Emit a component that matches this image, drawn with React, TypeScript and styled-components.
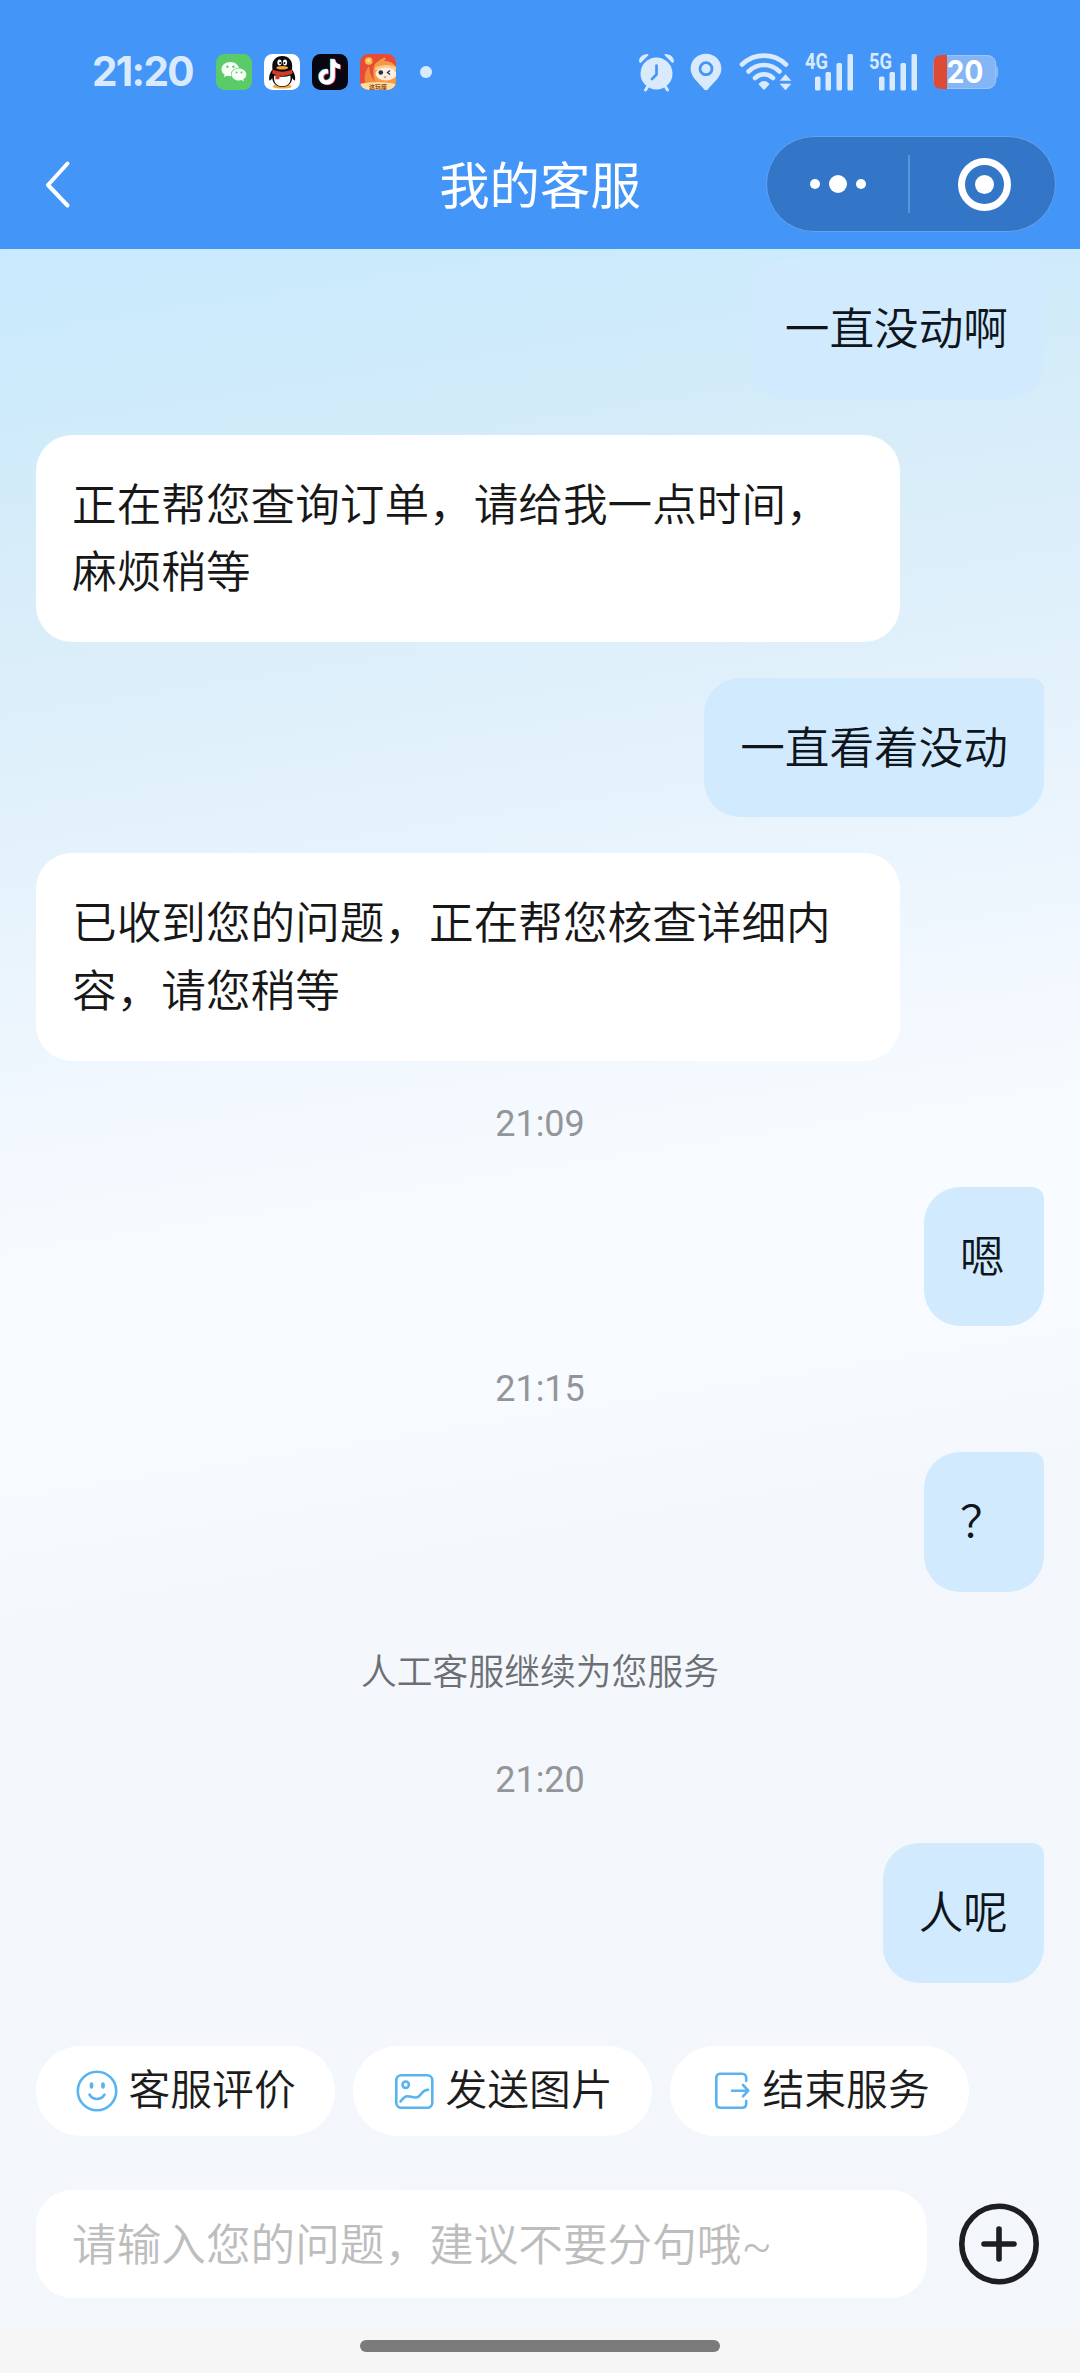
import React from "react";
import styled, { createGlobalStyle } from "styled-components";

const cjk = `Roboto, "Noto Sans CJK SC", sans-serif`;

const GlobalStyle = createGlobalStyle`
  * { box-sizing: border-box; }
  body { margin: 0; background: #f3f7fc; }
`;

const Screen = styled.main`
  width: 1080px;
  height: 2373px;
  display: flex;
  flex-direction: column;
  overflow: hidden;
  font-family: ${cjk};
  font-weight: 350;
  color: #171717;
  background: #f3f7fc;
`;

const Header = styled.header`
  flex: none;
  height: 249px;
  background: #4395f8;
`;

const StatusBar = styled.div`
  height: 120px;
  padding: 24px 81px 0 92px;
  display: flex;
  align-items: center;
  justify-content: space-between;
`;

const StatusGroup = styled.div<{ $gap: number }>`
  display: flex;
  align-items: center;
  gap: ${(p) => p.$gap}px;
`;

const Clock = styled.span`
  width: 112px;
  font: 650 40.5px/48px Inter, sans-serif;
  letter-spacing: -1.7px;
  color: #d9eafd;
  white-space: nowrap;
`;

const MoreDot = styled.span`
  width: 12px;
  height: 12px;
  margin-left: 12px;
  border-radius: 50%;
  background: #d9eafd;
`;

const NavBar = styled.div`
  height: 129px;
  padding: 16px 24px 0 39px;
  display: grid;
  grid-template-columns: 356px 1fr 356px;
  align-items: start;
`;

const BackButton = styled.button`
  width: 40px;
  height: 96px;
  padding: 0;
  border: 0;
  background: none;
  display: flex;
  align-items: center;
`;

const Title = styled.h1`
  margin: 0;
  padding-right: 15px;
  text-align: center;
  font-size: 50.4px;
  line-height: 102px;
  font-weight: 400;
  color: #fff;
  white-space: nowrap;
`;

const Capsule = styled.div`
  justify-self: end;
  width: 290px;
  height: 96px;
  border: 1.5px solid #61a3ee;
  border-radius: 48px;
  background: #3375c7;
  display: flex;
  align-items: center;
`;

const CapsuleHalf = styled.div<{ $shift?: number }>`
  flex: 1;
  padding-left: ${(p) => p.$shift ?? 0}px;
  display: flex;
  align-items: center;
  justify-content: center;
  gap: 9px;
`;

const CapsuleDot = styled.span<{ $size: number }>`
  width: ${(p) => p.$size}px;
  height: ${(p) => p.$size}px;
  border-radius: 50%;
  background: #fff;
`;

const CapsuleDivider = styled.span`
  width: 2px;
  height: 58px;
  background: #5795dc;
`;

const CapsuleRing = styled.span`
  flex: none;
  width: 53px;
  height: 53px;
  border: 7px solid #fff;
  border-radius: 50%;
  display: flex;
  align-items: center;
  justify-content: center;
`;

const Body = styled.section`
  flex: 1;
  display: flex;
  flex-direction: column;
  background: linear-gradient(
    171deg,
    #c9e9fd 0%,
    #cdebfb 6%,
    #d6ecf9 13%,
    #ddeffa 21%,
    #e7f3fc 29%,
    #f0f7fe 37%,
    #f8fbff 45%,
    #f8fbff 52%,
    #f4f8fd 60%,
    #f3f7fc 100%
  );
`;

const Messages = styled.div`
  flex: none;
  height: 1797px;
  padding: 10px 36px 0;
  display: flex;
  flex-direction: column;
  gap: 36px;
`;

const Bubble = styled.div<{ $mine: boolean }>`
  align-self: ${(p) => (p.$mine ? "flex-end" : "flex-start")};
  width: ${(p) => (p.$mine ? "auto" : "864px")};
  min-width: 120px;
  padding: 38px 36px 34px;
  border-radius: ${(p) => (p.$mine ? "36px 12px 36px 36px" : "36px")};
  background: ${(p) => (p.$mine ? "#d2eafd" : "#fff")};
  color: ${(p) => (p.$mine ? "#0e161c" : "#171717")};
  font-size: 44.64px;
  line-height: 67.6px;
  word-break: break-all;
`;

const TimeRow = styled.time`
  height: 54px;
  text-align: center;
  font-size: 36px;
  font-weight: 400;
  line-height: 54px;
  color: #939599;
`;

const Notice = styled.p`
  margin: 0;
  height: 89.500px;
  text-align: center;
  font-size: 35.8px;
  line-height: 90px;
  color: #6c6f74;
`;

const Actions = styled.div`
  padding: 0 36px;
  display: flex;
  gap: 18px;
`;

const Chip = styled.button`
  width: 299px;
  height: 90px;
  padding: 0 0 0 40px;
  border: 0;
  border-radius: 45px;
  background: #fff;
  display: flex;
  align-items: center;
  gap: 10.5px;
  font-family: inherit;
  font-weight: inherit;
  font-size: 41.8px;
  line-height: 60px;
  color: #1c1c1c;
  white-space: nowrap;

  svg { flex: none; }
  span { margin-top: -1px; }
`;

const Composer = styled.div`
  margin-top: 54px;
  padding: 0 36px;
  height: 108px;
  display: flex;
  align-items: center;
  gap: 31px;
`;

const Field = styled.input`
  width: 891px;
  height: 108px;
  padding: 3px 36px 0;
  border: 0;
  border-radius: 36px;
  background: #fff;
  font-family: inherit;
  font-weight: inherit;
  font-size: 44.64px;

  &::placeholder { color: #bdbdbd; opacity: 1; }
`;

const PlusButton = styled.button`
  padding: 0;
  border: 0;
  background: none;
  display: flex;
`;

const HomeArea = styled.footer`
  margin-top: auto;
  height: 45px;
  padding-top: 12px;
  display: flex;
  justify-content: center;
  background: #f6f6f6;
`;

const HomeBar = styled.span`
  width: 360px;
  height: 12px;
  border-radius: 6px;
  background: #7b7b7b;
`;

const SignalSvg = styled.svg`
  overflow: visible;
`;

const WifiSlot = styled.span`
  display: flex;
  margin: 0 -2px 0 2px;
`;

const TINT = "#d9eafd";

const WeChatIcon = () => (
  <svg width="36" height="36" viewBox="0 0 36 36">
    <rect width="36" height="36" rx="8.5" fill="#5acb66" />
    <path d="M14.3 8C9.400 8 5.500 11.200 5.500 15.200c0 2.300 1.200 4.200 3.200 5.500l-.8 2.600 3-1.600c1 .3 2.100.5 3.400.5 4.900 0 8.800-3.100 8.800-7S19.200 8 14.300 8Z" fill="#f5fff5" />
    <ellipse cx="22.900" cy="20.200" rx="7.800" ry="6.500" fill="#5acb66" />
    <path d="M22.900 14.400c-4.100 0-7.300 2.600-7.300 6s3.200 6 7.300 6c.9 0 1.800-.1 2.600-.4l2.500 1.300-.6-2.200c1.800-1.100 2.900-2.700 2.900-4.700 0-3.300-3.300-6-7.400-6Z" fill="#f5fff5" />
    <g fill="#5acb66">
      <circle cx="11.400" cy="12.800" r="1.200" /><circle cx="17.400" cy="12.800" r="1.200" />
      <circle cx="20.500" cy="18.500" r="1" /><circle cx="25.500" cy="18.500" r="1" />
    </g>
  </svg>
);

const QQIcon = () => (
  <svg width="36" height="36" viewBox="0 0 36 36">
    <rect width="36" height="36" rx="8.500" fill="#fff" />
    <path d="M9 32.500c0-1.400 3-2.500 9-2.500s9.500 1.100 9.500 2.500c0 1.600-4 2-9.200 2S9 34 9 32.500Z" fill="#f2a83b" />
    <path d="M18.300 2C11.800 2 8.300 6.600 8.300 11.900l.1 3.700C6 18.900 4.700 22.300 5.200 26.300c.8.600 2.200-.7 3-2.300.6 5.300 4.400 9 10.100 9s9.400-3.700 10-9c.8 1.600 2.100 2.900 2.800 2.300.5-4-.8-7.400-3.100-10.700l.2-3.700C28.200 6.600 24.800 2 18.300 2Z" fill="#0b0b0d" />
    <path d="M10.300 21.500c4.800 1.800 11.500 1.800 16 0 1.300 6.200-1.800 10.800-8 10.800s-9.300-4.600-8-10.800Z" fill="#fff" />
    <path d="M8.700 15.600c5.900 2.700 13.500 2.700 19.200 0l.8 4c-3.800 1.900-8.400 2.600-13 2.200l-.4 3.400-4 .1.400-4.500-3.600-1.200Z" fill="#d43a2b" />
    <ellipse cx="15.500" cy="8.600" rx="2.100" ry="3" fill="#fff" />
    <ellipse cx="21" cy="8.600" rx="2.100" ry="3" fill="#fff" />
    <circle cx="16.100" cy="8.900" r="1" /><circle cx="20.500" cy="8.900" r="1" />
    <ellipse cx="18.200" cy="13.700" rx="5.900" ry="1.700" fill="#f2a83b" />
  </svg>
);

const notePath = "M18.700 5.200h4.200c.4 3.200 2.200 5 5.200 5.300v4.300c-2-.1-3.700-.7-5.200-1.700v9.100c0 5.200-3.600 8.400-8.200 8.400-4.300 0-7.700-3.300-7.700-7.700 0-4.800 4-8.100 9-7.600v4.400c-2.600-.6-4.700.9-4.700 3.200 0 2 1.500 3.400 3.400 3.400 2.400 0 4-1.500 4-4.200Z";

const TikTokIcon = () => (
  <svg width="36" height="36" viewBox="0 0 36 36">
    <rect width="36" height="36" rx="8.500" fill="#070611" />
    <path d={notePath} fill="#5fe3e4" transform="translate(-.8 -.5)" />
    <path d={notePath} fill="#ee3f64" transform="translate(.9 .6)" />
    <path d={notePath} fill="#fff" />
  </svg>
);

const GameIcon = () => (
  <svg width="36" height="36" viewBox="0 0 36 36">
    <defs><clipPath id="game-clip"><rect width="36" height="36" rx="8.500" /></clipPath></defs>
    <g clipPath="url(#game-clip)">
      <rect width="36" height="36" fill="#e94b37" />
      <circle cx="8.700" cy="7" r="3.800" fill="#f4bf4a" />
      <circle cx="8.700" cy="6.600" r="1.500" fill="#fbe6a0" />
      <path d="M5 29c-1-6 0-12 4-17 1 5 1 10 6 15v4Z" fill="#f08a3c" />
      <path d="M13.500 15c0-5 4-7.500 9-10.500 1.500-1 3-1 3.500 0l-2 2.500c6-.5 12 3 13 9v14H17c-4-4-4-10-3.500-15Z" fill="#f39a45" />
      <path d="M15 14c5-3.500 14-4 21-1v3H15Z" fill="#ffc987" />
      <ellipse cx="26" cy="20" rx="10.500" ry="6.500" fill="#fdf0e2" />
      <circle cx="20.800" cy="18.500" r="2.300" fill="#2e2c45" />
      <path d="m30 16.500-2.500 2 2.500 2" fill="none" stroke="#2e2c45" strokeWidth="1.300" />
      <path d="M23.500 22.500h3l-1.500 2Z" fill="#e86a4a" />
      <path d="M0 30c6-2.500 28-2.500 36 0v6H0Z" fill="#ffdf9f" />
      <text x="18" y="34.600" textAnchor="middle" fontSize="6" fontWeight="700" fill="#8c4a22">这玩座</text>
    </g>
  </svg>
);

const AlarmIcon = () => (
  <svg width="37" height="39" viewBox="0 0 37 39">
    <g stroke={TINT} strokeWidth="3" strokeLinecap="round"><path d="m10 33-2.500 4M27 33l2.500 4" /></g>
    <path d="M1.600 9.600C-.5 6.500 3.800.8 9.500 1c1 0 1.300 1 .6 1.600L3.200 9.500c-.5.600-1.200.6-1.600.1ZM35.400 9.600C37.500 6.500 33.200.8 27.500 1c-1 0-1.300 1-.6 1.600l6.900 6.900c.5.600 1.200.6 1.600.1Z" fill={TINT} />
    <circle cx="18.500" cy="20.500" r="16" fill={TINT} />
    <path d="M18.500 12.500v9l-4.500 4.500" fill="none" stroke="#4395f8" strokeWidth="2.700" strokeLinecap="round" strokeLinejoin="round" />
  </svg>
);

const PinIcon = () => (
  <svg width="32" height="38" viewBox="0 0 32 38">
    <path d="M16 .7C7.400.7.600 7.300.600 15.700c0 8.500 8.300 13.800 13.400 20.500 1.200 1.500 2.800 1.500 4 0 5.100-6.700 13.400-12 13.400-20.500C31.400 7.300 24.600.7 16 .7Z" fill={TINT} />
    <circle cx="16" cy="15.700" r="6" fill="none" stroke="#4395f8" strokeWidth="2.800" />
  </svg>
);

const WifiIcon = () => (
  <svg width="53" height="38" viewBox="0 0 53 38">
    <g fill="none" stroke={TINT} strokeWidth="4.600" strokeLinecap="round">
      <path d="M3 11.500c12.500-11.800 31.500-11.800 44 0M9.500 18.500c9-8.700 22-8.700 31 0M16 25c5.500-4.800 12.500-4.800 18 0" />
    </g>
    <path d="M20 30.500c3-3.300 7-3.300 10 0l.300 1-4.200 4.400c-.7.700-1.500.7-2.200 0l-4.200-4.400Z" fill={TINT} />
    <path d="m46.500 21.500 5.300 6H41.200ZM46.500 37l5.300-6H41.200Z" fill={TINT} stroke={TINT} strokeWidth=".6" strokeLinejoin="round" />
  </svg>
);

const SignalIcon = ({ label }: { label: string }) => (
  <SignalSvg width="49" height="46" viewBox="0 -3.500 49 46">
    <text x="0" y="16.500" fontFamily="Roboto, sans-serif" fontSize="21.500" fontWeight="700" textLength="23" lengthAdjust="spacingAndGlyphs" fill={TINT}>{label}</text>
    <g fill={TINT}>
      <rect x="10" y="24" width="5.500" height="14" rx="1.500" />
      <rect x="20.500" y="19.500" width="5.500" height="18.500" rx="1.500" />
      <rect x="31.500" y="10.500" width="5.500" height="27.500" rx="1.500" />
      <rect x="42.500" y="1.500" width="5.500" height="36.500" rx="1.500" />
    </g>
  </SignalSvg>
);

const BatteryIcon = () => (
  <svg width="66" height="36" viewBox="0 0 66 36">
    <path d="M62.500 11.500c2.200.6 2.700 2 2.700 6.500s-.5 5.900-2.700 6.500Z" fill="#84b9f8" />
    <rect x=".7" y="1.500" width="62" height="33" rx="8" fill="#84b6f6" stroke="#9cc6f9" strokeWidth="1" />
    <path d="M14 1v34H8.500c-5 0-8-3-8-8V9c0-5 3-8 8-8Z" fill="#dd4b37" />
    <text x="13.500" y="29.300" fontFamily="Inter, sans-serif" fontSize="31" fontWeight="700" textLength="37" lengthAdjust="spacingAndGlyphs" fill="#fff">20</text>
  </svg>
);

const SmileIcon = () => (
  <svg width="42" height="42" viewBox="0 0 42 42" fill="none" stroke="#58b3ee" strokeWidth="2.600" strokeLinecap="round">
    <circle cx="21" cy="21" r="19.200" />
    <path d="M13.500 24.500c3.500 6 11.500 6 15 0" />
    <g fill="#58b3ee" stroke="none"><ellipse cx="15.500" cy="15.500" rx="1.900" ry="3.200" /><ellipse cx="27" cy="15.500" rx="1.900" ry="3.200" /></g>
  </svg>
);

const PictureIcon = () => (
  <svg width="42" height="42" viewBox="0 0 42 42" fill="none" stroke="#58b3ee" strokeWidth="2.600" strokeLinecap="round" strokeLinejoin="round">
    <rect x="3.300" y="5.300" width="36" height="32.400" rx="5" />
    <circle cx="12.700" cy="14.700" r="3.200" />
    <path d="M7.500 31.500c2.500-3.500 4.500-5.300 7-5.300 3.500 0 7.500 2.700 11 .4 3.500-2.400 3.300-6.600 9.500-6.900" />
  </svg>
);

const ExitIcon = () => (
  <svg width="42" height="42" viewBox="0 0 42 42" fill="none" stroke="#58b3ee" strokeWidth="2.600" strokeLinecap="round" strokeLinejoin="round">
    <path d="M36.200 11V8c0-2.600-1.500-4.200-4.200-4.200H10.500C7.700 3.800 6.300 5.300 6.300 8v25.500c0 2.700 1.400 4.200 4.200 4.200H32c2.700 0 4.200-1.500 4.200-4.200v-2.500" />
    <path d="M22 20.700h16M33 15l5.300 5.700L33 26.400" />
  </svg>
);

const PlusIcon = () => (
  <svg width="82" height="84" viewBox="0 0 82 84" fill="none" stroke="#1c1e20" strokeWidth="5.600" strokeLinecap="round">
    <ellipse cx="41" cy="42" rx="37.200" ry="37.700" />
    <path d="M26 42h30M41 27v30" />
  </svg>
);

type Entry =
  | { kind: "mine" | "agent" | "time" | "notice"; text: string };

const entries: Entry[] = [
  { kind: "mine", text: "一直没动啊" },
  { kind: "agent", text: "正在帮您查询订单，请给我一点时间，麻烦稍等" },
  { kind: "mine", text: "一直看着没动" },
  { kind: "agent", text: "已收到您的问题，正在帮您核查详细内容，请您稍等" },
  { kind: "time", text: "21:09" },
  { kind: "mine", text: "嗯" },
  { kind: "time", text: "21:15" },
  { kind: "mine", text: "？" },
  { kind: "notice", text: "人工客服继续为您服务" },
  { kind: "time", text: "21:20" },
  { kind: "mine", text: "人呢" },
];

const EntryRow = ({ entry }: { entry: Entry }) => {
  if (entry.kind === "time") return <TimeRow>{entry.text}</TimeRow>;
  if (entry.kind === "notice") return <Notice>{entry.text}</Notice>;
  return <Bubble $mine={entry.kind === "mine"}>{entry.text}</Bubble>;
};

export default function App() {
  return (
    <Screen lang="zh-CN">
      <GlobalStyle />
      <Header>
        <StatusBar>
          <StatusGroup $gap={12}>
            <Clock>21:20</Clock>
            <WeChatIcon />
            <QQIcon />
            <TikTokIcon />
            <GameIcon />
            <MoreDot />
          </StatusGroup>
          <StatusGroup $gap={15}>
            <AlarmIcon />
            <PinIcon />
            <WifiSlot><WifiIcon /></WifiSlot>
            <SignalIcon label="4G" />
            <SignalIcon label="5G" />
            <BatteryIcon />
          </StatusGroup>
        </StatusBar>
        <NavBar>
          <BackButton aria-label="返回">
            <svg width="36" height="50" viewBox="0 0 36 50" fill="none" stroke="#fff" strokeWidth="4" strokeLinecap="round" strokeLinejoin="round">
              <path d="M28.500 4.500 9 26l19.500 20.500" />
            </svg>
          </BackButton>
          <Title>我的客服</Title>
          <Capsule>
            <CapsuleHalf>
              <CapsuleDot $size={10} />
              <CapsuleDot $size={18} />
              <CapsuleDot $size={10} />
            </CapsuleHalf>
            <CapsuleDivider />
            <CapsuleHalf $shift={4}>
              <CapsuleRing>
                <CapsuleDot $size={19} />
              </CapsuleRing>
            </CapsuleHalf>
          </Capsule>
        </NavBar>
      </Header>
      <Body>
        <Messages>
          {entries.map((entry, i) => (
            <EntryRow key={i} entry={entry} />
          ))}
        </Messages>
        <Actions>
          <Chip><SmileIcon /><span>客服评价</span></Chip>
          <Chip><PictureIcon /><span>发送图片</span></Chip>
          <Chip><ExitIcon /><span>结束服务</span></Chip>
        </Actions>
        <Composer>
          <Field placeholder="请输入您的问题，建议不要分句哦~" />
          <PlusButton aria-label="更多"><PlusIcon /></PlusButton>
        </Composer>
        <HomeArea><HomeBar /></HomeArea>
      </Body>
    </Screen>
  );
}
